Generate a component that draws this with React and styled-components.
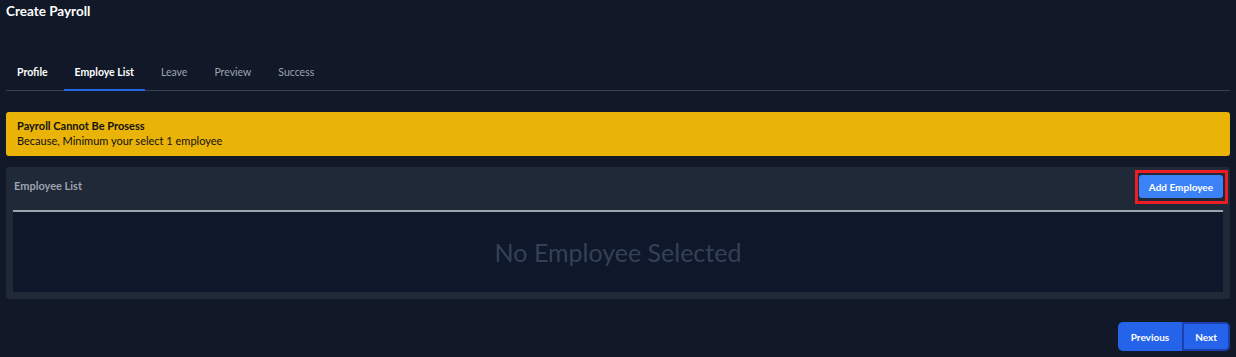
import React from 'react';
import styled, { createGlobalStyle } from 'styled-components';

const GlobalStyle = createGlobalStyle`
  body {
    margin: 0;
    background: #111827;
    font-family: Lato, "Open Sans", sans-serif;
    color: #fff;
  }
`;

const Page = styled.div`
  padding: 0 6px 6px 6px;
  min-height: 357px;
  box-sizing: border-box;
  display: flex;
  flex-direction: column;
`;

const Title = styled.h1`
  margin: 0;
  padding-top: 1px;
  font-size: 13.5px;
  font-weight: 700;
  line-height: 20px;
  color: #fff;
`;

const Tabs = styled.div`
  display: flex;
  gap: 5px;
  margin-top: 40px;
  border-bottom: 1px solid #374151;
`;

const Tab = styled.div`
  padding: 0 11px;
  height: 30px;
  line-height: 22px;
  font-size: 10.5px;
  font-weight: ${p => (p.$done || p.$active ? 700 : 400)};
  color: ${p => (p.$done || p.$active ? '#fff' : '#9ca3af')};
  border-bottom: 2px solid ${p => (p.$active ? '#2563eb' : 'transparent')};
  margin-bottom: -1px;
  box-sizing: border-box;
`;

const Alert = styled.div`
  margin-top: 21px;
  background: #eab308;
  border-radius: 3px;
  padding: 7px 11px 8px 11px;
  color: #111;
  font-size: 11px;
  line-height: 14.5px;
`;

const AlertTitle = styled.div`
  font-weight: 700;
`;

const Card = styled.div`
  margin-top: 11px;
  background: #1f2937;
  border-radius: 3px;
  padding: 3px 7px 7px 7px;
`;

const CardHeader = styled.div`
  display: flex;
  justify-content: space-between;
  align-items: flex-start;
  height: 40px;
  border-bottom: 2px solid #9ca3af;
`;

const CardTitle = styled.div`
  padding-top: 9px;
  padding-left: 1px;
  font-size: 11px;
  font-weight: 700;
  color: #9ca3af;
`;

const Highlight = styled.div`
  border: 3px solid #ee1c25;
  padding: 2px 2px 3px 1px;
  margin-right: -5px;
`;

const PrimaryButton = styled.button`
  background: #3b82f6;
  color: #fff;
  border: none;
  border-radius: 3px;
  height: 23px;
  padding: 0 10px;
  font-family: inherit;
  font-size: 10px;
  font-weight: 700;
  display: block;
`;

const Empty = styled.div`
  background: #0f172a;
  height: 80px;
  display: flex;
  align-items: center;
  justify-content: center;
  font-size: 25px;
  color: #334155;
`;

const Footer = styled.div`
  margin-top: auto;
  display: flex;
  justify-content: flex-end;
`;

const NavButton = styled.button`
  background: #2563eb;
  color: #fff;
  border: 2px solid ${p => (p.$focus ? '#1e40af' : 'transparent')};
  height: 29px;
  padding: 0 11px;
  font-family: inherit;
  font-size: 10px;
  font-weight: 700;
  border-radius: ${p => (p.$left ? '5px 0 0 5px' : '0 5px 5px 0')};
`;

export default function App() {
  return (
    <>
      <GlobalStyle />
      <Page>
        <Title>Create Payroll</Title>
        <Tabs>
          <Tab $done>Profile</Tab>
          <Tab $active>Employe List</Tab>
          <Tab>Leave</Tab>
          <Tab>Preview</Tab>
          <Tab>Success</Tab>
        </Tabs>
        <Alert>
          <AlertTitle>Payroll Cannot Be Prosess</AlertTitle>
          <div>Because, Minimum your select 1 employee</div>
        </Alert>
        <Card>
          <CardHeader>
            <CardTitle>Employee List</CardTitle>
            <Highlight>
              <PrimaryButton>Add Employee</PrimaryButton>
            </Highlight>
          </CardHeader>
          <Empty>No Employee Selected</Empty>
        </Card>
        <Footer>
          <NavButton $left>Previous</NavButton>
          <NavButton $focus>Next</NavButton>
        </Footer>
      </Page>
    </>
  );
}
